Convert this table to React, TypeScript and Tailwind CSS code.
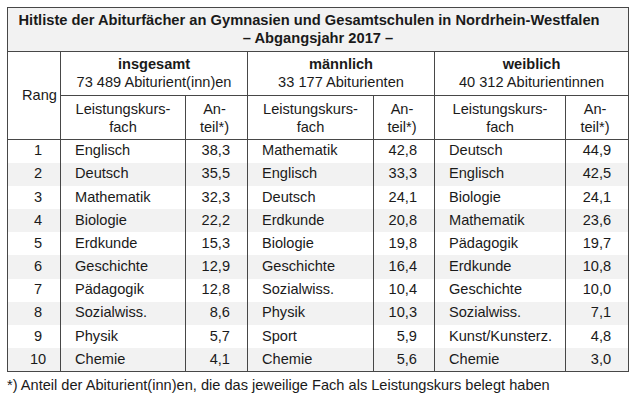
const insgesamt: [string, string][] = [
  ["Englisch", "38,3"],
  ["Deutsch", "35,5"],
  ["Mathematik", "32,3"],
  ["Biologie", "22,2"],
  ["Erdkunde", "15,3"],
  ["Geschichte", "12,9"],
  ["Pädagogik", "12,8"],
  ["Sozialwiss.", "8,6"],
  ["Physik", "5,7"],
  ["Chemie", "4,1"],
];

const maennlich: [string, string][] = [
  ["Mathematik", "42,8"],
  ["Englisch", "33,3"],
  ["Deutsch", "24,1"],
  ["Erdkunde", "20,8"],
  ["Biologie", "19,8"],
  ["Geschichte", "16,4"],
  ["Sozialwiss.", "10,4"],
  ["Physik", "10,3"],
  ["Sport", "5,9"],
  ["Chemie", "5,6"],
];

const weiblich: [string, string][] = [
  ["Deutsch", "44,9"],
  ["Englisch", "42,5"],
  ["Biologie", "24,1"],
  ["Mathematik", "23,6"],
  ["Pädagogik", "19,7"],
  ["Erdkunde", "10,8"],
  ["Geschichte", "10,0"],
  ["Sozialwiss.", "7,1"],
  ["Kunst/Kunsterz.", "4,8"],
  ["Chemie", "3,0"],
];

const groups = [
  { title: "insgesamt", sub: "73 489 Abiturient(inn)en" },
  { title: "männlich", sub: "33 177 Abiturienten" },
  { title: "weiblich", sub: "40 312 Abiturientinnen" },
];

const cell = "border border-[#474747]";

export default function App() {
  return (
    <div className="w-[636px] h-[407px] bg-white pt-[7px] pl-[7px] text-[#1a1a1a] font-['Liberation_Sans',Arial,sans-serif] text-[14.6px]">
      <table className="w-[621px] table-fixed border-collapse">
        <colgroup>
          <col className="w-[53px]" />
          <col className="w-[125px]" />
          <col className="w-[62px]" />
          <col className="w-[126px]" />
          <col className="w-[61px]" />
          <col className="w-[131px]" />
          <col className="w-[63px]" />
        </colgroup>
        <thead>
          <tr className="h-[44px] bg-[#f2f2f2]">
            <th colSpan={7} className={`${cell} text-[14.7px] font-bold leading-[18px] pb-[2px]`}>
              <div className="pr-[18px]">
                Hitliste der Abiturfächer an Gymnasien und Gesamtschulen in Nordrhein-Westfalen
              </div>
              <div>– Abgangsjahr 2017 –</div>
            </th>
          </tr>
          <tr className="h-[44px]">
            <th rowSpan={2} className={`${cell} font-normal pl-[11px]`}>
              Rang
            </th>
            {groups.map((g) => (
              <th key={g.title} colSpan={2} className={`${cell} font-normal leading-[18px] pb-[1px]`}>
                <div className="font-bold">{g.title}</div>
                <div>{g.sub}</div>
              </th>
            ))}
          </tr>
          <tr className="h-[44px]">
            {groups.map((g) => [
              <th key={g.title + "f"} className={`${cell} font-normal leading-[18px]`}>
                Leistungskurs-
                <br />
                fach
              </th>,
              <th key={g.title + "a"} className={`${cell} font-normal leading-[18px] pr-[4px]`}>
                An-
                <br />
                teil*)
              </th>,
            ])}
          </tr>
        </thead>
        <tbody>
          {insgesamt.map((row, i) => (
            <tr key={i} className={`h-[23.2px] ${i % 2 === 1 ? "bg-[#f2f2f2]" : "bg-white"}`}>
              <td className="border-l border-r border-[#474747] text-center pl-[8px]">{i + 1}</td>
              {[row, maennlich[i], weiblich[i]].map(([fach, anteil], j) => [
                <td key={j + "f"} className="pl-[14px] whitespace-nowrap">
                  {fach}
                </td>,
                <td key={j + "a"} className="text-right pr-[17px] border-l border-r border-[#474747]">
                  {anteil}
                </td>,
              ])}
            </tr>
          ))}
          <tr>
            <td colSpan={7} className="border-t border-[#474747]" />
          </tr>
        </tbody>
      </table>
      <p className="mt-[3px] leading-[20px]">
        *) Anteil der Abiturient(inn)en, die das jeweilige Fach als Leistungskurs belegt haben
      </p>
    </div>
  );
}
